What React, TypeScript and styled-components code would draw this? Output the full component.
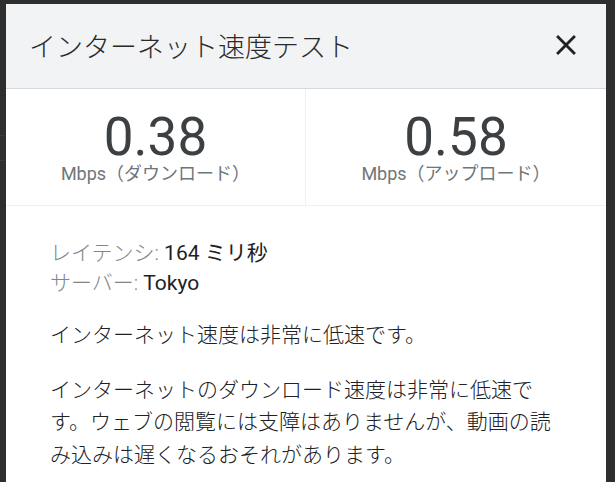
import React from "react";
import styled, { createGlobalStyle } from "styled-components";

const GlobalStyle = createGlobalStyle`
  html, body {
    margin: 0;
    padding: 0;
    background: #2e2e2e;
    overflow: hidden;
  }
  body {
    font-family: Roboto, "Noto Sans CJK JP", sans-serif;
  }
`;

const Backdrop = styled.div`
  position: relative;
  width: 615px;
  height: 482px;
  background: #2e2e2e;
  overflow: hidden;
`;

const BackLine = styled.div<{ $top: number }>`
  position: absolute;
  left: 0;
  top: ${(p) => p.$top}px;
  width: 6px;
  height: 1px;
  background: #3a3a3a;
`;

const Dialog = styled.div`
  position: absolute;
  left: 6px;
  top: 4px;
  width: 600px;
  height: 520px;
  background: #ffffff;
  display: flex;
  flex-direction: column;
`;

const Header = styled.header`
  box-sizing: border-box;
  height: 85px;
  background: #f1f3f4;
  border-bottom: 1px solid #d6d8db;
  display: flex;
  align-items: center;
  justify-content: space-between;
  padding: 3px 23px 0 23px;
`;

const Title = styled.h1`
  margin: 0;
  font-size: 27px;
  line-height: 32px;
  font-weight: 300;
  color: #2a2a2a;
`;

const CloseButton = styled.button`
  width: 34px;
  height: 34px;
  padding: 0;
  border: 0;
  background: transparent;
  display: flex;
  align-items: center;
  justify-content: center;
  color: #202124;
  cursor: pointer;
  margin-top: -6px;
`;

const Stats = styled.div`
  display: grid;
  grid-template-columns: 1fr 1fr;
  border-bottom: 1px solid #eef0f1;
`;

const Stat = styled.div<{ $divider?: boolean }>`
  display: flex;
  flex-direction: column;
  align-items: center;
  padding: 22px 0 21px;
  border-right: ${(p) => (p.$divider ? "1px solid #eef0f1" : "none")};
`;

const Value = styled.div`
  font-family: Roboto, sans-serif;
  font-size: 53px;
  line-height: 53px;
  color: #3c4043;
`;

const Unit = styled.div`
  font-size: 18px;
  line-height: 20px;
  color: #70757a;
`;

const Content = styled.div`
  padding: 32px 48px 0 44px;
  font-size: 21px;
  color: #3c4043;
`;

const Info = styled.div`
  line-height: 30px;
  margin-bottom: 21px;
`;

const Label = styled.span`
  color: #80868b;
  font-weight: 300;
`;

const Val = styled.span`
  color: #202124;
`;

const Para = styled.p`
  margin: 0 0 22px;
  line-height: 32.5px;
  font-weight: 300;
  color: #202124;
`;

export default function App() {
  return (
    <>
      <GlobalStyle />
      <Backdrop>
        <BackLine $top={135} />
        <BackLine $top={160} />
        <Dialog>
          <Header>
            <Title>インターネット速度テスト</Title>
            <CloseButton aria-label="閉じる">
              <svg width="34" height="34" viewBox="0 0 24 24" fill="currentColor">
                <path d="M19 6.41L17.59 5 12 10.59 6.41 5 5 6.41 10.59 12 5 17.59 6.41 19 12 13.41 17.59 19 19 17.59 13.41 12z" />
              </svg>
            </CloseButton>
          </Header>
          <Stats>
            <Stat $divider>
              <Value>0.38</Value>
              <Unit>Mbps（ダウンロード）</Unit>
            </Stat>
            <Stat>
              <Value>0.58</Value>
              <Unit>Mbps（アップロード）</Unit>
            </Stat>
          </Stats>
          <Content>
            <Info>
              <div>
                <Label>レイテンシ: </Label>
                <Val>164 ミリ秒</Val>
              </div>
              <div>
                <Label>サーバー: </Label>
                <Val>Tokyo</Val>
              </div>
            </Info>
            <Para>インターネット速度は非常に低速です。</Para>
            <Para>
              インターネットのダウンロード速度は非常に低速です。ウェブの閲覧には支障はありませんが、動画の読み込みは遅くなるおそれがあります。
            </Para>
          </Content>
        </Dialog>
      </Backdrop>
    </>
  );
}
